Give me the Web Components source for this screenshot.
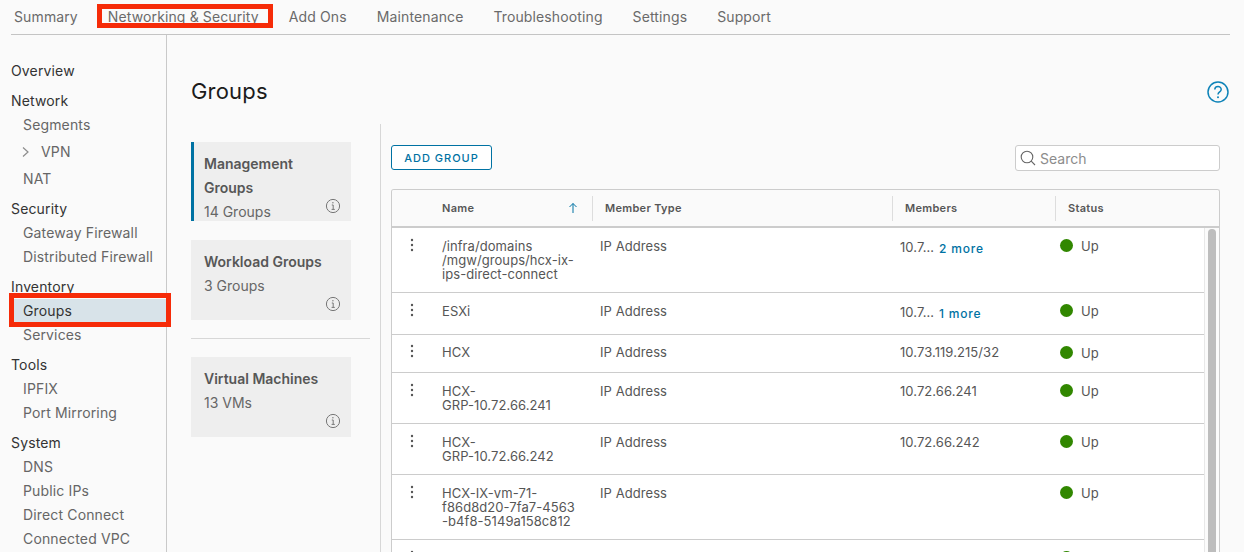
<!DOCTYPE html>
<html>
<head>
<meta charset="utf-8">
<title>Groups</title>
<style>
  html, body { margin: 0; height: 552px; overflow: hidden; background: #fafafa; }
  body { font-family: Inter, "Liberation Sans", sans-serif; color: #565656; }
</style>
</head>
<body>
<vmc-console></vmc-console>
<script>
class VmcTabs extends HTMLElement {
  constructor() {
    super();
    this.shadowDOM = this.attachShadow({ mode: 'open' });
    const tabs = ['Summary', 'Networking & Security', 'Add Ons', 'Maintenance', 'Troubleshooting', 'Settings', 'Support'];
    this.shadowDOM.innerHTML = `
      <style>
      :host { display: flex; gap: 30px; height: 34px; margin: 0 14px 0 11px; padding-left: 3px; border-bottom: 1px solid #c4c4c4; font-size: 14px; letter-spacing: .12px; color: #6a6a6a; }
      span { position: relative; line-height: 34px; white-space: nowrap; }
      .hl::after { content: ''; position: absolute; left: -11px; right: -14px; top: 4px; height: 24px; box-sizing: border-box; border: 5px solid #f62b08; }
      </style>
      ${tabs.map((t) => `<span class="${t.startsWith('Net') ? 'hl' : ''}">${t.replace('&', '&amp;')}</span>`).join('')}
    `;
  }
}

class SideNav extends HTMLElement {
  constructor() {
    super();
    this.shadowDOM = this.attachShadow({ mode: 'open' });
    const sections = [
      ['Overview', []],
      ['Network', ['Segments', '>VPN', 'NAT']],
      ['Security', ['Gateway Firewall', 'Distributed Firewall']],
      ['Inventory', ['*Groups', 'Services']],
      ['Tools', ['IPFIX', 'Port Mirroring']],
      ['System', ['DNS', 'Public IPs', 'Direct Connect', 'Connected VPC']],
    ];
    const item = (name) => {
      if (name[0] === '>') {
        return `<div class="item vpn"><svg width="10" height="12" viewBox="0 0 10 12"><path d="M2 1.5 7 6 2 10.5" fill="none" stroke="#8c8c8c" stroke-width="1.2"/></svg>${name.slice(1)}</div>`;
      }
      if (name[0] === '*') return `<div class="item active">${name.slice(1)}</div>`;
      return `<div class="item">${name}</div>`;
    };
    this.shadowDOM.innerHTML = `
      <style>
      :host { display: block; flex: none; position: relative; z-index: 1; width: 156px; margin-left: 11px; padding-top: 18px; box-sizing: border-box; border-right: 1px solid #c9c9c9; font-size: 14px; letter-spacing: .15px; }
      .head { height: 24px; line-height: 24px; color: #333; margin-top: 6px; }
      .item { height: 24px; line-height: 24px; padding-left: 12px; color: #666; position: relative; }
      .vpn { height: 30px; line-height: 30px; display: flex; align-items: center; gap: 10px; padding-left: 10px; }
      .active { color: #333; background: #d8e3e9; }
      .active::after { content: ''; position: absolute; left: -2px; right: -5px; top: -6px; bottom: -4px; border: 5px solid #f62b08; box-sizing: border-box; }
      </style>
      ${sections.map(([h, items]) => `<div class="head">${h}</div>${items.map(item).join('')}`).join('')}
    `;
  }
}

class GroupCard extends HTMLElement {
  constructor() {
    super();
    this.shadowDOM = this.attachShadow({ mode: 'open' });
    this.shadowDOM.innerHTML = `
      <style>
      :host { display: block; position: relative; width: 160px; box-sizing: border-box; background: #eee; padding: 10px 13px 0; font-size: 14px; line-height: 24px; color: #666; }
      :host([selected]) { border-left: 3px solid #0072a3; padding-left: 10px; }
      b { display: block; font-weight: 600; color: #575757; }
      svg { position: absolute; right: 10px; bottom: 8px; }
      :host([selected]) svg { bottom: 7px; }
      </style>
      <b><slot name="title"></slot></b>
      <slot></slot>
      <svg width="16" height="16" viewBox="0 0 16 16" fill="none" stroke="#777"><circle cx="8" cy="8" r="6.6"/><path d="M6.8 7h1.4v4.2M6.6 11.4h3.2"/><circle cx="7.9" cy="4.8" r=".7" fill="#777" stroke="none"/></svg>
    `;
  }
}

class GroupTable extends HTMLElement {
  constructor() {
    super();
    this.shadowDOM = this.attachShadow({ mode: 'open' });
  }

  connectedCallback() {
    const rows = [
      ['/infra/domains<br>/mgw/groups/hcx-ix-<br>ips-direct-connect', '10.7…', '2 more'],
      ['ESXi', '10.7…', '1 more'],
      ['HCX', '10.73.119.215/32'],
      ['HCX-<br>GRP-10.72.66.241', '10.72.66.241'],
      ['HCX-<br>GRP-10.72.66.242', '10.72.66.242'],
      ['HCX-IX-vm-71-<br>f86d8d20-7fa7-4563<br>-b4f8-5149a158c812', ''],
      ['', ''],
    ];
    const dots = '<svg class="dots" width="4" height="14" viewBox="0 0 4 14" fill="#565656"><circle cx="2" cy="2" r="1.2"/><circle cx="2" cy="7" r="1.2"/><circle cx="2" cy="12" r="1.2"/></svg>';
    this.shadowDOM.innerHTML = `
      <style>
      :host { display: block; height: 363px; overflow: hidden; box-sizing: border-box; background: #fff; border: 1px solid #ccc; border-bottom: 0; border-radius: 3px 3px 0 0; font-size: 13px; letter-spacing: .07px; color: #565656; }
      .cols { display: grid; grid-template-columns: 42px 158px 300px 163px 1fr; }
      .header { height: 36px; background: #fafafa; border-bottom: 2px solid #ccc; align-items: center; font-size: 11px; font-weight: 600; letter-spacing: .3px; color: #565656; }
      .header div { height: 25px; line-height: 25px; padding-left: 12px; border-left: 1px solid #ddd; }
      .header div:nth-child(1) { border: 0; }
      .header div:nth-child(2) { border: 0; padding: 0 14px 0 8px; display: flex; justify-content: space-between; align-items: center; }
      .body { display: flex; height: 330px; }
      .rows { flex: 1; min-width: 0; }
      .rows .cols { border-bottom: 1px solid #ccc; }
      .cell { padding: 11px 8px; line-height: 14px; }
      .tight .cell:not(.status) { padding: 10px 8px 12px; }
      .dots { display: block; margin: -1px 0 0 10px; }
      .m { display: flex; gap: 5px; line-height: 15px; }
      .short { padding-top: 1px; }
      .more { color: #0072a3; font-size: 12px; font-weight: 500; letter-spacing: .8px; padding-top: 2px; height: 17px; }
      .status { display: flex; gap: 8px; align-items: center; padding: 10px 8px 12px 5px; line-height: 14px; height: 15px; box-sizing: content-box; }
      i { width: 13px; height: 13px; border-radius: 50%; background: #318700; }
      .bar { width: 15px; flex: none; background: #fbfbfb; border-left: 1px solid #e8e8e8; box-sizing: border-box; padding: 1px 3px 0 3px; }
      .bar div { height: 100%; background: #bdbdbd; border-radius: 4px 4px 0 0; }
      </style>
      <div class="cols header">
        <div></div>
        <div>Name<svg width="10" height="12" viewBox="0 0 10 12" fill="none" stroke="#0072a3"><path d="M5 11V1.5M1.5 5 5 1.5 8.5 5"/></svg></div>
        <div>Member Type</div>
        <div>Members</div>
        <div>Status</div>
      </div>
      <div class="body">
        <div class="rows">
          ${rows.map(([name, member, more]) => `
            <div class="cols ${name === 'HCX' ? 'tight' : ''}">
              <div class="cell">${dots}</div>
              <div class="cell">${name}</div>
              <div class="cell">${name ? 'IP Address' : ''}</div>
              <div class="cell m"><span class="${more ? 'short' : ''}">${member}</span>${more ? `<span class="more">${more}</span>` : ''}</div>
              <div class="cell status"><i></i>${name ? 'Up' : ''}</div>
            </div>`).join('')}
        </div>
        <div class="bar"><div></div></div>
      </div>
    `;
  }
}

class GroupsPage extends HTMLElement {
  constructor() {
    super();
    this.shadowDOM = this.attachShadow({ mode: 'open' });
    this.shadowDOM.innerHTML = `
      <style>
      :host { display: flex; flex-direction: column; flex: 1; min-width: 0; padding: 0 24px 0 24px; box-sizing: border-box; }
      header { display: flex; justify-content: space-between; align-items: center; height: 89px; margin-right: -10px; }
      h1 { margin: 23px 0 0; font-size: 22px; font-weight: 400; letter-spacing: .2px; color: #1b1b1b; line-height: 34px; }
      header svg { margin: 25px 1px 0 0; }
      .split { display: flex; flex: 1; }
      .cards { width: 189px; flex: none; padding-top: 18px; box-sizing: border-box; display: flex; flex-direction: column; }
      group-card + group-card { margin-top: 19px; }
      .mgmt { height: 79px; }
      .work { height: 80px; }
      .vm { height: 80px; }
      hr { width: 179px; margin: 18px 0 18px; border: 0; border-top: 1px solid #d7d7d7; }
      .main { flex: 1; min-width: 0; border-left: 1px solid #d7d7d7; padding: 21px 0 0 10px; }
      .tools { display: flex; justify-content: space-between; align-items: flex-start; height: 44px; }
      button { width: 101px; height: 25px; background: #fff; border: 1px solid #0072a3; border-radius: 3px; color: #0072a3; font: 500 11px Inter, "Liberation Sans", sans-serif; letter-spacing: 1px; padding: 0; }
      .search { display: flex; align-items: center; gap: 4px; width: 205px; height: 26px; box-sizing: border-box; padding-left: 4px; background: #fff; border: 1px solid #ccc; border-radius: 3px; font-size: 14px; color: #8c8c8c; }
      </style>
      <header>
        <h1>Groups</h1>
        <svg width="22" height="22" viewBox="0 0 22 22" fill="none" stroke="#0e83b8" stroke-width="1.5"><circle cx="11" cy="11" r="10"/><path d="M7.8 8.6c0-4 6.4-4 6.400-.2 0 2.600-3.200 2.400-3.200 5.200"/><circle cx="11" cy="16.300" r="1" fill="#0e83b8" stroke="none"/></svg>
      </header>
      <div class="split">
        <div class="cards">
          <group-card class="mgmt" selected><span slot="title">Management<br>Groups</span>14 Groups</group-card>
          <group-card class="work"><span slot="title">Workload Groups</span>3 Groups</group-card>
          <hr>
          <group-card class="vm"><span slot="title">Virtual Machines</span>13 VMs</group-card>
        </div>
        <div class="main">
          <div class="tools">
            <button>ADD GROUP</button>
            <div class="search"><svg width="16" height="16" viewBox="0 0 16 16" fill="none" stroke="#666" stroke-width="1.1"><circle cx="7" cy="7" r="5.800"/><path d="M11.200 11.200 15 15"/></svg>Search</div>
          </div>
          <group-table></group-table>
        </div>
      </div>
    `;
  }
}

class VmcConsole extends HTMLElement {
  constructor() {
    super();
    this.shadowDOM = this.attachShadow({ mode: 'open' });
    this.shadowDOM.innerHTML = `
      <style>
      :host { display: flex; flex-direction: column; height: 552px; overflow: hidden; }
      .layout { display: flex; flex: 1; min-height: 0; }
      </style>
      <vmc-tabs></vmc-tabs>
      <div class="layout">
        <side-nav></side-nav>
        <groups-page></groups-page>
      </div>
    `;
  }
}

customElements.define('vmc-tabs', VmcTabs);
customElements.define('side-nav', SideNav);
customElements.define('group-card', GroupCard);
customElements.define('group-table', GroupTable);
customElements.define('groups-page', GroupsPage);
customElements.define('vmc-console', VmcConsole);
</script>
</body>
</html>
